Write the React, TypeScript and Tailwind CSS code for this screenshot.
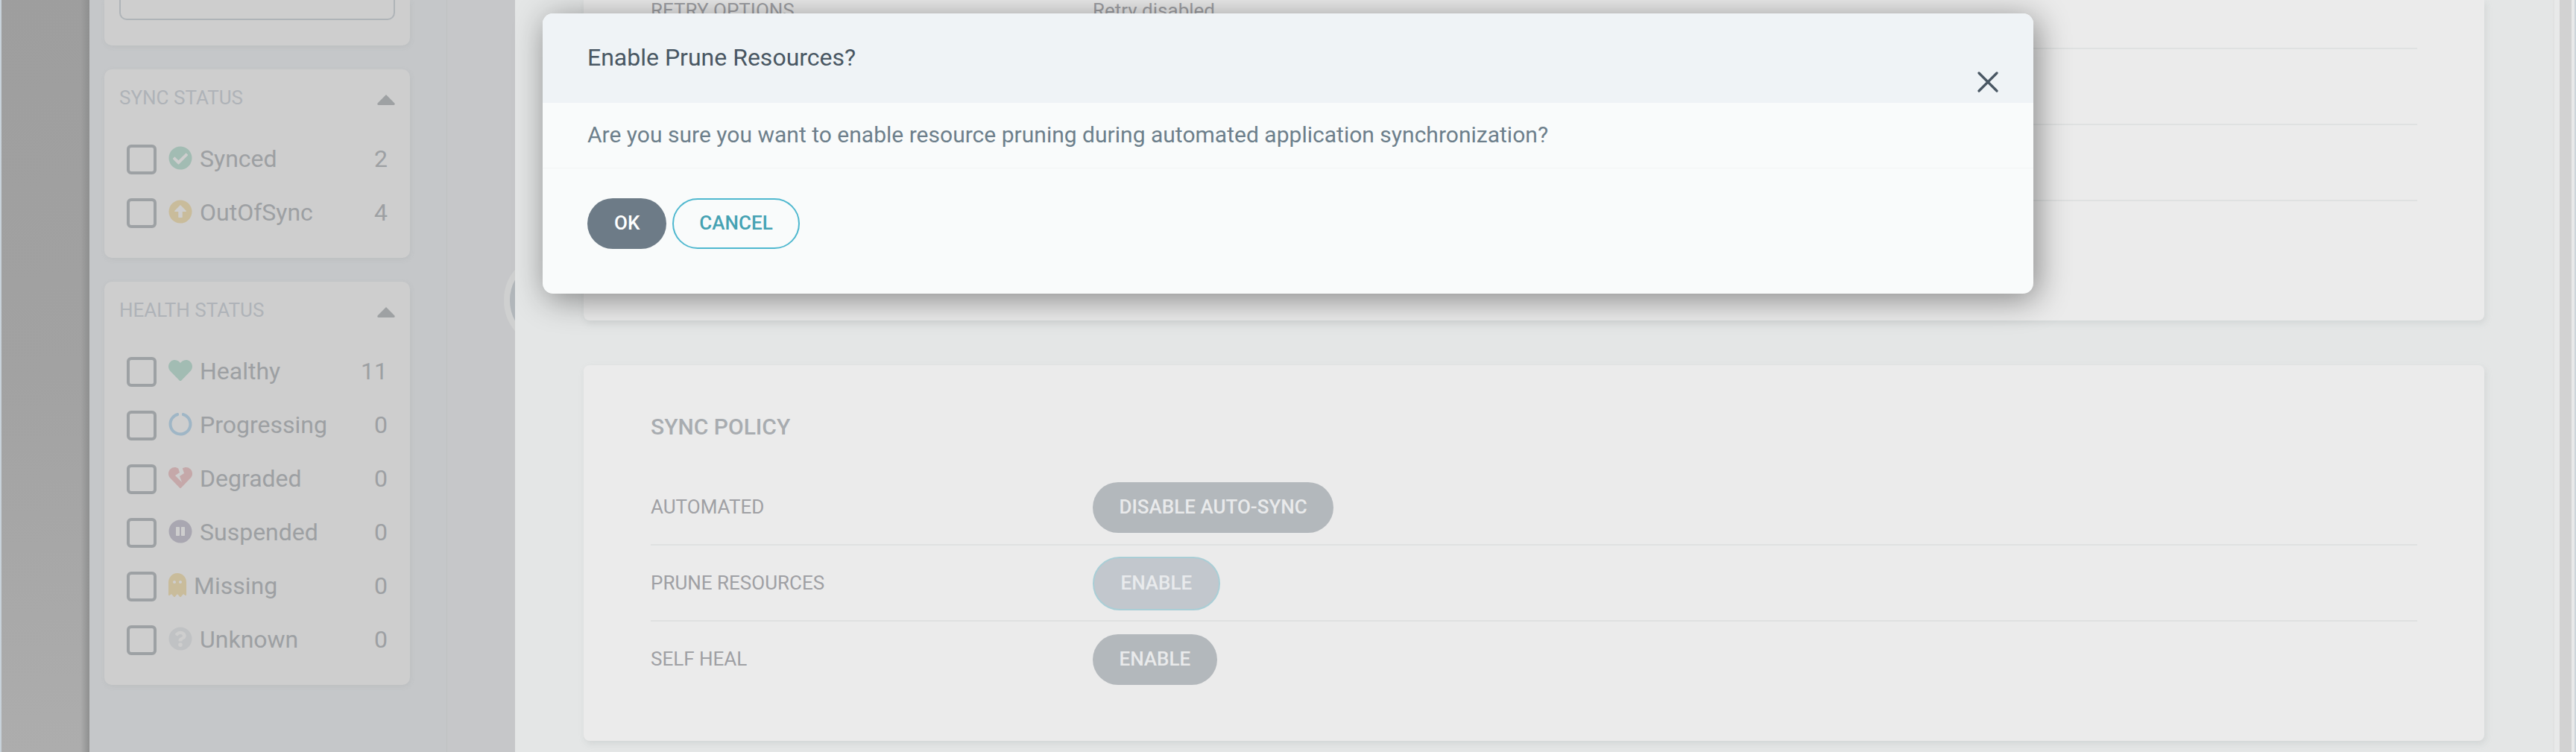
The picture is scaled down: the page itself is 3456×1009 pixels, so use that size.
import type { ReactNode } from "react";
import {
  FaArrowAltCircleUp,
  FaCheckCircle,
  FaCircleNotch,
  FaGhost,
  FaHeart,
  FaHeartBroken,
  FaPauseCircle,
  FaQuestionCircle,
} from "react-icons/fa";

type FilterItem = { label: string; count: number; icon: ReactNode };

const syncItems: FilterItem[] = [
  { label: "Synced", count: 2, icon: <FaCheckCircle className="h-8 w-8 text-[#a2bcb3]" /> },
  { label: "OutOfSync", count: 4, icon: <FaArrowAltCircleUp className="h-8 w-8 text-[#c9bc9b]" /> },
];

const healthItems: FilterItem[] = [
  { label: "Healthy", count: 11, icon: <FaHeart className="h-8 w-8 text-[#a2bcb3]" /> },
  { label: "Progressing", count: 0, icon: <FaCircleNotch className="h-8 w-8 text-[#9fb6c6]" /> },
  { label: "Degraded", count: 0, icon: <FaHeartBroken className="h-8 w-8 text-[#c5a8a9]" /> },
  { label: "Suspended", count: 0, icon: <FaPauseCircle className="h-8 w-8 text-[#a9a7b1]" /> },
  { label: "Missing", count: 0, icon: <FaGhost className="h-8 w-6 text-[#c9bc9b]" /> },
  { label: "Unknown", count: 0, icon: <FaQuestionCircle className="h-8 w-8 text-[#c0c2c4]" /> },
];

function FilterCard({ title, items }: { title: string; items: FilterItem[] }) {
  return (
    <section className="rounded-[10px] bg-[#cecece] px-[30px] pb-10 shadow-[1px_2px_6px_rgba(140,150,150,0.16)]">
      <div className="-mx-[10px] flex h-[101px] items-start justify-between pt-[22px]">
        <h2 className="text-[26px] leading-8 text-[#afb3b8]">{title}</h2>
        <svg className="mt-3 h-[14px] w-6 text-[#9ea1a3]" viewBox="0 0 24 14" fill="currentColor">
          <path d="M12 0 L23.4 11.4 Q24.4 14 22 14 H2 Q-.4 14 .6 11.4 Z" />
        </svg>
      </div>
      <div className="flex flex-col gap-8">
        {items.map((item) => (
          <div key={item.label} className="flex h-10 items-start text-[32px] leading-[38px] text-[#9da0a3]">
            <span className="mr-4 h-10 w-10 shrink-0 rounded-[6px] border-4 border-[#9da1a4]" />
            <span className="mr-[10px] mt-[2px]">{item.icon}</span>
            <span className="grow">{item.label}</span>
            <span>{item.count}</span>
          </div>
        ))}
      </div>
    </section>
  );
}

function Row({ label, last, children }: { label: string; last?: boolean; children?: ReactNode }) {
  return (
    <div
      className={
        last
          ? "flex h-[100px] items-center"
          : "flex h-[102px] items-center border-b-2 border-[#dfe1e1]"
      }
    >
      <div className="w-[593px] shrink-0 text-[26px] leading-8 text-[#9fa0a4]">{label}</div>
      {children}
    </div>
  );
}

function PolicyButton({ children }: { children: string }) {
  return (
    <button className="mt-[2px] h-[68px] rounded-full bg-[#b3b8bc] px-[35.5px] pb-px text-[26px] font-medium text-[#e9eaeb]">
      {children}
    </button>
  );
}

export default function App() {
  return (
    <div className="relative flex h-[1009px] w-[3456px] overflow-hidden bg-[#e4e6e6] font-[Roboto,sans-serif]">
      <div className="w-[2px] shrink-0 bg-[#c8d2da]" />
      <nav className="flex w-[118px] shrink-0 justify-end bg-linear-to-b from-[#9e9e9e] via-[#a2a2a2] to-[#adadad]">
        <div className="w-3 bg-linear-to-r from-transparent to-[#8e8f8f]" />
      </nav>

      <aside className="relative flex w-[571px] shrink-0 overflow-hidden bg-[#c6c7c9]">
        <div className="flex w-[480px] flex-col gap-8 border-r border-[#bfc1c2] bg-[#c5c7c9] pl-5 pr-[49px]">
          <section className="h-[61px] shrink-0 rounded-b-[10px] bg-[#cecece] px-5 shadow-[1px_2px_6px_rgba(140,150,150,0.16)]">
            <div className="h-[27px] rounded-b-[10px] border-2 border-t-0 border-[#afb4b8]" />
          </section>
          <FilterCard title="SYNC STATUS" items={syncItems} />
          <FilterCard title="HEALTH STATUS" items={healthItems} />
        </div>
        <div className="absolute left-[556px] top-[339px] h-32 w-32 rounded-full border-8 border-[#cfd0d0] bg-[#b1b6ba]" />
      </aside>

      <main className="flex min-w-0 grow flex-col gap-[60px] px-[92px]">
        <section className="h-[430px] shrink-0 rounded-b-[8px] bg-[#ebebeb] px-[90px] shadow-[2px_4px_8px_rgba(150,160,160,0.22)]">
          <div className="-mt-9">
            <Row label="RETRY OPTIONS">
              <span className="text-[26px] leading-8 text-[#9fa0a4]">Retry disabled</span>
            </Row>
            <Row label="" />
            <Row label="" />
          </div>
        </section>

        <section className="h-[504px] shrink-0 rounded-[8px] bg-[#ebebeb] px-[90px] shadow-[2px_4px_8px_rgba(150,160,160,0.22)]">
          <h2 className="h-[140px] pt-[65px] text-[30px] font-medium leading-9 text-[#a8acb0]">SYNC POLICY</h2>
          <Row label="AUTOMATED">
            <PolicyButton>DISABLE AUTO-SYNC</PolicyButton>
          </Row>
          <Row label="PRUNE RESOURCES">
            <button className="mt-[2px] h-[72px] rounded-full border-2 border-[#a9ced6] bg-[#c2c7cd] px-[35.5px] pb-px text-[26px] font-medium text-[#e8eaec]">
              ENABLE
            </button>
          </Row>
          <Row label="SELF HEAL" last>
            <PolicyButton>ENABLE</PolicyButton>
          </Row>
        </section>
      </main>

      <div className="flex w-[31px] shrink-0 border-l-2 border-[#e1e2e2] bg-[#e8e9e9] pl-[7px]">
        <div className="mr-1 w-4 bg-[#d2d2d2]" />
        <div className="w-[2px] bg-[#cdd5da]" />
      </div>

      <div
        role="dialog"
        className="absolute left-[728px] top-[18px] flex h-[376px] w-[2000px] flex-col overflow-hidden rounded-[14px] bg-[#f9fbfb] shadow-[5px_7px_44px_rgba(0,0,0,0.44)]"
      >
        <header className="flex h-[120px] shrink-0 items-start justify-between bg-[#eff3f6] pl-[60px] pr-[47px]">
          <h1 className="pt-10 text-[32px] leading-[38px] text-[#495763]">Enable Prune Resources?</h1>
          <svg className="mt-[78px] h-7 w-7 text-[#495763]" viewBox="0 0 28 28" fill="none" stroke="currentColor" strokeWidth="3.2" strokeLinecap="round">
            <path d="M2 2 L26 26 M26 2 L2 26" />
          </svg>
        </header>
        <div className="h-[88px] shrink-0 border-b border-[#f3f5f5] pl-[60px] pt-[25px] text-[30px] leading-9 tracking-[0.015px] text-[#6d7f8b]">
          Are you sure you want to enable resource pruning during automated application synchronization?
        </div>
        <footer className="flex gap-2 pl-[60px] pt-10">
          <button className="h-[68px] rounded-full bg-[#6d7b87] px-9 pb-[2px] text-[26px] font-medium text-white">OK</button>
          <button className="h-[68px] rounded-full border-2 border-[#4fb8cf] px-[34px] pb-[2px] text-[26px] font-medium text-[#45a2b3]">
            CANCEL
          </button>
        </footer>
      </div>
    </div>
  );
}
